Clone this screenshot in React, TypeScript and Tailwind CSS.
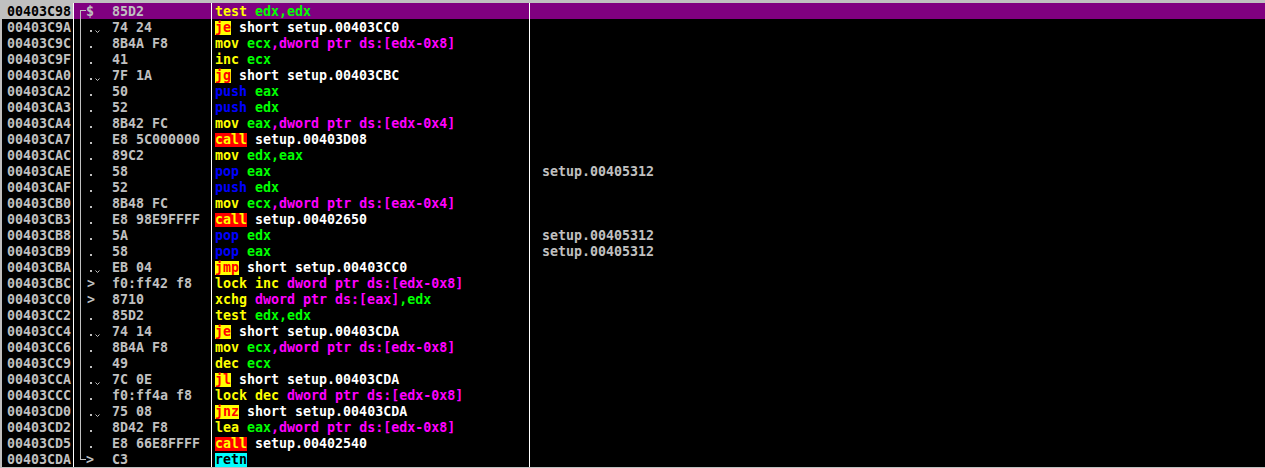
import React from "react";

type Seg = [string, string];
type Mark = "top" | "dot" | "jmp" | "tgt" | "end";
type Row = { a: string; m: Mark; b: string; d: Seg[]; c?: string; sel?: boolean };

const Y = "text-[#ffff00]";
const G = "text-[#00ff00]";
const M = "text-[#ff00ff]";
const W = "text-white";
const B = "text-[#0000ff]";
const JB = "inline-block leading-[14px] bg-[#ffff00] text-[#ff0000]";
const CB = "inline-block leading-[14px] bg-[#ff0000] text-[#ffff00]";
const RB = "inline-block leading-[14px] bg-[#00ffff] text-black";
const SP: Seg = [" ", W];

const rows: Row[] = [
  { a: "00403C98", m: "top", b: "85D2", d: [["test", Y], SP, ["edx,edx", G]], sel: true },
  { a: "00403C9A", m: "jmp", b: "74 24", d: [["je", JB], SP, ["short setup.00403CC0", W]] },
  { a: "00403C9C", m: "dot", b: "8B4A F8", d: [["mov", Y], SP, ["ecx", G], [",dword ptr ds:[edx-0x8]", M]] },
  { a: "00403C9F", m: "dot", b: "41", d: [["inc", Y], SP, ["ecx", G]] },
  { a: "00403CA0", m: "jmp", b: "7F 1A", d: [["jg", JB], SP, ["short setup.00403CBC", W]] },
  { a: "00403CA2", m: "dot", b: "50", d: [["push", B], SP, ["eax", G]] },
  { a: "00403CA3", m: "dot", b: "52", d: [["push", B], SP, ["edx", G]] },
  { a: "00403CA4", m: "dot", b: "8B42 FC", d: [["mov", Y], SP, ["eax", G], [",dword ptr ds:[edx-0x4]", M]] },
  { a: "00403CA7", m: "dot", b: "E8 5C000000", d: [["call", CB], SP, ["setup.00403D08", W]] },
  { a: "00403CAC", m: "dot", b: "89C2", d: [["mov", Y], SP, ["edx,eax", G]] },
  { a: "00403CAE", m: "dot", b: "58", d: [["pop", B], SP, ["eax", G]], c: "setup.00405312" },
  { a: "00403CAF", m: "dot", b: "52", d: [["push", B], SP, ["edx", G]] },
  { a: "00403CB0", m: "dot", b: "8B48 FC", d: [["mov", Y], SP, ["ecx", G], [",dword ptr ds:[eax-0x4]", M]] },
  { a: "00403CB3", m: "dot", b: "E8 98E9FFFF", d: [["call", CB], SP, ["setup.00402650", W]] },
  { a: "00403CB8", m: "dot", b: "5A", d: [["pop", B], SP, ["edx", G]], c: "setup.00405312" },
  { a: "00403CB9", m: "dot", b: "58", d: [["pop", B], SP, ["eax", G]], c: "setup.00405312" },
  { a: "00403CBA", m: "jmp", b: "EB 04", d: [["jmp", JB], SP, ["short setup.00403CC0", W]] },
  { a: "00403CBC", m: "tgt", b: "f0:ff42 f8", d: [["lock inc", Y], SP, ["dword ptr ds:[edx-0x8]", M]] },
  { a: "00403CC0", m: "tgt", b: "8710", d: [["xchg", Y], SP, ["dword ptr ds:[eax]", M], [",edx", G]] },
  { a: "00403CC2", m: "dot", b: "85D2", d: [["test", Y], SP, ["edx,edx", G]] },
  { a: "00403CC4", m: "jmp", b: "74 14", d: [["je", JB], SP, ["short setup.00403CDA", W]] },
  { a: "00403CC6", m: "dot", b: "8B4A F8", d: [["mov", Y], SP, ["ecx", G], [",dword ptr ds:[edx-0x8]", M]] },
  { a: "00403CC9", m: "dot", b: "49", d: [["dec", Y], SP, ["ecx", G]] },
  { a: "00403CCA", m: "jmp", b: "7C 0E", d: [["jl", JB], SP, ["short setup.00403CDA", W]] },
  { a: "00403CCC", m: "dot", b: "f0:ff4a f8", d: [["lock dec", Y], SP, ["dword ptr ds:[edx-0x8]", M]] },
  { a: "00403CD0", m: "jmp", b: "75 08", d: [["jnz", JB], SP, ["short setup.00403CDA", W]] },
  { a: "00403CD2", m: "dot", b: "8D42 F8", d: [["lea", Y], SP, ["eax", G], [",dword ptr ds:[edx-0x8]", M]] },
  { a: "00403CD5", m: "dot", b: "E8 66E8FFFF", d: [["call", CB], SP, ["setup.00402540", W]] },
  { a: "00403CDA", m: "end", b: "C3", d: [["retn", RB]] },
];

function Marker({ m }: { m: Mark }) {
  return (
    <div className="flex w-[38px] h-[16px] shrink-0 pl-[6px]">
      <div className="flex flex-col w-[6px] shrink-0">
        {m === "top" && (
          <>
            <div className="h-[7px]" />
            <div className="flex-1 border-l border-t border-[#c0c0c0]" />
          </>
        )}
        {m === "end" && <div className="h-[9px] border-l border-b border-[#c0c0c0]" />}
        {(m === "dot" || m === "jmp" || m === "tgt") && (
          <div className="flex-1 border-l border-[#c0c0c0]" />
        )}
      </div>
      {m === "top" && <span>$</span>}
      {m === "end" && <span>&gt;</span>}
      {m === "tgt" && <span className="ml-[1px]">&gt;</span>}
      {(m === "dot" || m === "jmp") && (
        <div className="ml-[4px] mt-[11px] w-[2px] h-[2px] bg-[#c0c0c0]" />
      )}
      {m === "jmp" && (
        <svg className="ml-[3px] mt-[11px]" width="5" height="3" viewBox="0 0 5 3">
          <polyline points="0.5,0.5 2.5,2.5 4.5,0.5" fill="none" stroke="#c0c0c0" strokeWidth="1" />
        </svg>
      )}
    </div>
  );
}

export default function App() {
  return (
    <div
      className="w-[1265px] h-[468px] bg-[#c0c0c0] pt-[3px] pl-[2px] overflow-hidden font-bold text-[13.3px] leading-[18px] whitespace-pre"
      style={{ fontFamily: '"DejaVu Sans Mono", monospace' }}
    >
      <div className="flex flex-col bg-black">
        {rows.map((r) => (
          <div key={r.a} className={`flex h-[16px] ${r.sel ? "bg-[#800080]" : "bg-black"}`}>
            <div
              className={`w-[72px] shrink-0 border-r border-white pl-[5px] ${
                r.sel ? "bg-[#c0c0c0] text-black" : "bg-black text-[#c0c0c0]"
              }`}
            >
              {r.a}
            </div>
            <div className="w-[138px] shrink-0 border-r border-white flex text-[#c0c0c0]">
              <Marker m={r.m} />
              <span>{r.b}</span>
            </div>
            <div className="w-[318px] shrink-0 border-r border-white pl-[3px]">
              {r.d.map((s, i) => (
                <span key={i} className={s[1]}>
                  {s[0]}
                </span>
              ))}
            </div>
            <div className="flex-1 pl-[12px] text-[#c0c0c0]">{r.c ?? ""}</div>
          </div>
        ))}
      </div>
    </div>
  );
}
